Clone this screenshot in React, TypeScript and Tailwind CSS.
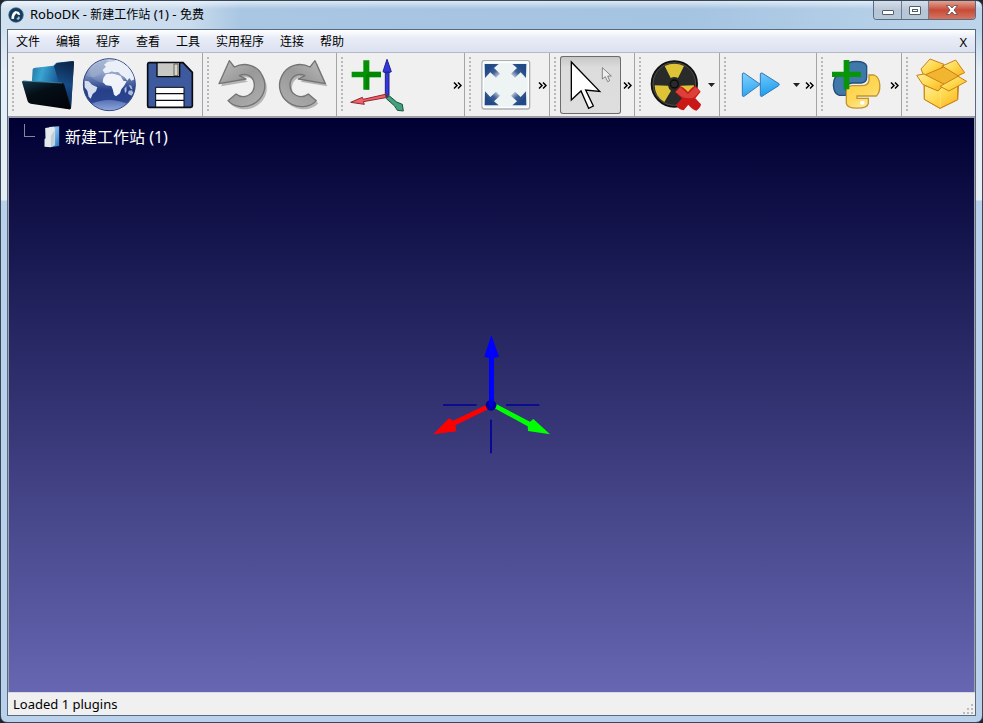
import type { ReactNode } from "react";

const menus = ["文件", "编辑", "程序", "查看", "工具", "实用程序", "连接", "帮助"];

type ToolProps = {
  label: string;
  viewBox: string;
  active?: boolean;
  children: ReactNode;
};

const Tool = ({ label, viewBox, active = false, children }: ToolProps) => (
  <button
    type="button"
    aria-label={label}
    aria-pressed={active}
    className={
      active
        ? "h-[58px] w-[61px] shrink-0 rounded-[3px] bg-linear-to-b from-[#c6c6c6] via-[#dcdcdc] via-20% to-[#dedede] ring-1 ring-inset ring-[#6c6c68]"
        : "h-[58px] w-[60px] shrink-0 rounded-[3px]"
    }
  >
    <svg viewBox={viewBox} className="h-[58px] w-[60px]" aria-hidden="true">
      {children}
    </svg>
  </button>
);

const More = () => (
  <button type="button" aria-label="更多" className="ml-auto mr-px flex h-[58px] w-[11px] items-center justify-center">
    <svg viewBox="0 0 9 7" className="h-[7px] w-[9px]" aria-hidden="true">
      <path d="M1 .5l3 3-3 3M5 .5l3 3-3 3" fill="none" stroke="#000" strokeWidth="1.5" />
    </svg>
  </button>
);

const Drop = ({ label }: { label: string }) => (
  <button type="button" aria-label={label} className="flex h-[58px] w-[11px] items-center justify-center">
    <svg viewBox="0 0 7 4" className="h-[4px] w-[7px]" aria-hidden="true">
      <path d="M0 0h7L3.500 4z" fill="#222" />
    </svg>
  </button>
);

const Group = ({ width, children }: { width: string; children: ReactNode }) => (
  <div className={`flex shrink-0 border-r border-[#a5a5a8] pt-[3px] pb-[2px] pl-1 ${width}`}>
    <div className="mt-px mr-1 h-[55px] w-[2px] shrink-0 bg-[repeating-linear-gradient(to_bottom,#b9b9b9_0px,#b9b9b9_2px,transparent_2px,transparent_4px)]" />
    <div className="flex flex-1 gap-px">{children}</div>
  </div>
);

const FolderIcon = () => (
  <>
    <defs>
      <linearGradient id="folderBack" x1="0" y1="0" x2="1" y2="0.3">
        <stop offset="0" stopColor="#1d6c96" />
        <stop offset="0.3" stopColor="#39a5d2" />
        <stop offset="0.65" stopColor="#1a5f9b" />
        <stop offset="1" stopColor="#0b2550" />
      </linearGradient>
      <linearGradient id="folderFront" x1="0" y1="0" x2="0.6" y2="1">
        <stop offset="0" stopColor="#12394c" />
        <stop offset="0.45" stopColor="#050e16" />
        <stop offset="1" stopColor="#02060b" />
      </linearGradient>
      <linearGradient id="folderSide" x1="0" y1="0" x2="0" y2="1">
        <stop offset="0" stopColor="#0a1c38" />
        <stop offset="0.5" stopColor="#17518f" />
        <stop offset="1" stopColor="#0c2a55" />
      </linearGradient>
    </defs>
    <path d="M98 58Q99 53 106 53L160 47 169 38 217 33Q223 33 222 40L213 174 208 178 92 150z" fill="url(#folderBack)" />
    <path d="M162 49L171 39 222 34 213 176 204 160 190 98 176 97z" fill="url(#folderSide)" opacity=".8" />
    <path d="M66 96Q66 92 71 92L184 98Q190 98 193 104L213 174Q212 179 206 178L92 161Q85 159 83 154z" fill="url(#folderFront)" />
    <path d="M70 93L186 99" stroke="#4d9fba" strokeWidth="2" />
  </>
);

const GlobeIcon = () => (
  <>
    <defs>
      <linearGradient id="ocean" x1="0" y1="0" x2="0" y2="1">
        <stop offset="0" stopColor="#c6d1e6" />
        <stop offset="0.3" stopColor="#7b90bf" />
        <stop offset="0.6" stopColor="#263f87" />
        <stop offset="0.82" stopColor="#2b4592" />
        <stop offset="1" stopColor="#8ba3d9" />
      </linearGradient>
      <clipPath id="globeClip">
        <circle cx="328" cy="104" r="77" />
      </clipPath>
    </defs>
    <circle cx="328" cy="104" r="78" fill="url(#ocean)" stroke="#2b437f" strokeWidth="3" />
    <g clipPath="url(#globeClip)">
      <path d="M274 56Q290 34 316 30L326 34 318 50 308 58 300 72 282 82 266 80 260 74z" fill="#8c9fc4" opacity=".7" />
      <path d="M308 60L318 50 312 44 322 36 342 34 352 28 376 38 398 64 404 88 394 92 388 84 382 92 374 82 364 76 354 66 346 70 336 64 326 68 314 70z" fill="#e9eef7" />
      <path d="M318 73L334 70 352 74 362 78 370 92 380 94 372 108 364 118 360 130 348 139 342 134 338 118 334 108 318 106 308 96 310 84z" fill="#eef2fa" />
      <path d="M254 92L266 94 276 104 292 112 288 124 278 132 272 146 266 140 262 122 254 112z" fill="#d5deef" />
      <path d="M373 116l6-7 1 14-5 7zM386 104l8 3 4 12-6-3zM386 122l10-1 4 8-6 8-10-6z" fill="#a9bbdf" />
      <path d="M328 70l12-2 14 0M350 74l6-6" stroke="#8196bd" strokeWidth="3" fill="none" />
      <ellipse cx="328" cy="64" rx="60" ry="37" fill="#fff" opacity=".13" />
      <path d="M276 161Q326 139 380 161 356 182 328 182 299 181 276 161z" fill="#92a9e0" opacity=".5" />
    </g>
  </>
);

const SaveIcon = () => (
  <>
    <path d="M447 38H549L577 67V168Q577 172 572 172H447Q443 172 443 167V43Q443 38 447 38z" fill="#3e5a9e" stroke="#080b12" strokeWidth="5" />
    <path d="M471 38H539V80H471z" fill="#c8c8c5" stroke="#080b12" strokeWidth="4" />
    <path d="M522 42H534V77H522z" fill="#d6d3c8" stroke="#30302c" strokeWidth="2" />
    <path d="M467 112H552V171H467z" fill="#fff" stroke="#080b12" strokeWidth="3" />
    <path d="M467 131H552M467 151H552" stroke="#080b12" strokeWidth="4" />
  </>
);

const turnPath =
  "M88 32L57 101 138 87 118 77C141 67 163 81 163 105 163 136 130 149 108 132L84 152C101 171 132 175 156 164 191 148 204 110 187 77 171 44 133 36 103 51z";

const TurnArrow = ({ id, flip }: { id: string; flip?: boolean }) => (
  <>
    <defs>
      <linearGradient id={id} x1="0" y1="0" x2="0.7" y2="1">
        <stop offset="0" stopColor="#bcbcbc" />
        <stop offset="0.5" stopColor="#999" />
        <stop offset="1" stopColor="#aaa" />
      </linearGradient>
    </defs>
    <g transform="translate(6 8)">
      <path d={turnPath} transform={flip ? "translate(433 0) scale(-1 1)" : undefined} fill="#b5b5b5" />
    </g>
    <path
      d={turnPath}
      transform={flip ? "translate(433 0) scale(-1 1)" : undefined}
      fill={`url(#${id})`}
      stroke="#747474"
      strokeWidth="4"
      strokeLinejoin="round"
    />
  </>
);

const FrameIcon = () => (
  <>
    <path d="M490 31h18v34h35v17h-35v37h-18V82h-35V65h35z" fill="#059105" />
    <path d="M508 65h35v17h-35v37h-10V75z" fill="#007300" opacity=".4" />
    <g strokeLinejoin="round" strokeWidth="3">
      <path d="M556 66h11v69h-11zM561 28l13 37q-13 9-25 0z" fill="#3438dc" stroke="#1f2189" />
      <path d="M560 132l3 10-73 13 3 8-41-6 35-15 3 6z" fill="#f4606a" stroke="#8b2932" />
      <path d="M566 136l24 20 17 7 3 20-18-2-8-13-25-22z" fill="#41a27b" stroke="#1c5140" />
    </g>
    <circle cx="561" cy="137" r="6" fill="#403d65" />
  </>
);

const cornerPath = "M254 42h42l-14 12 18 17-12 12-17-16-16 17z";

const FitIcon = () => (
  <>
    <defs>
      <linearGradient id="corner" x1="0" y1="0" x2="1" y2="1">
        <stop offset="0.3" stopColor="#204985" />
        <stop offset="0.6" stopColor="#3e5f97" />
        <stop offset="1" stopColor="#f1f5f8" />
      </linearGradient>
    </defs>
    <rect x="246" y="32" width="143" height="145" rx="7" fill="#eef3f4" stroke="#adb1b1" strokeWidth="4" />
    <rect x="250" y="36" width="135" height="136" rx="4" fill="none" stroke="#fff" strokeWidth="4" />
    <path d={cornerPath} fill="url(#corner)" />
    <path d={cornerPath} transform="translate(633 0) scale(-1 1)" fill="url(#corner)" />
    <path d={cornerPath} transform="translate(0 208) scale(1 -1)" fill="url(#corner)" />
    <path d={cornerPath} transform="translate(633 208) scale(-1 -1)" fill="url(#corner)" />
  </>
);

const SelectIcon = () => (
  <>
    <path d="M514 36V150L543 123 566 175 580 168 557 120 599 124z" fill="#fff" stroke="#000" strokeWidth="4" />
    <path d="M607 53V87L616 80 623 95 629 92 623 78 634 78z" fill="#eee" stroke="#555" strokeWidth="2" />
  </>
);

const CollisionIcon = () => (
  <>
    <circle cx="133" cy="102" r="68" fill="#292a2a" stroke="#111" strokeWidth="6" />
    <circle cx="133" cy="102" r="64" fill="none" stroke="#626356" strokeWidth="2" />
    <path d="M104 48Q133 34 162 48L144 84Q133 78 122 84zM74 106L114 107Q116 117 123 122L103 156Q74 139 74 106zM192 106L152 107Q151 117 143 122L163 156Q192 139 192 106z" fill="#dec337" />
    <circle cx="133" cy="102" r="12" fill="#292a29" stroke="#0b0b0b" strokeWidth="4" />
    <path d="M135 126L151 109Q160 111 174 126 188 108 197 108L212 125 196 145 213 163Q211 175 199 182 187 179 175 164L161 181Q146 180 138 165L156 145z" fill="#c91818" />
    <path d="M137 126L151 111 174 132 196 110 210 124 191 143Q166 148 153 139z" fill="#e34b42" opacity=".75" />
  </>
);

const ForwardIcon = () => (
  <>
    <defs>
      <linearGradient id="forward" x1="0" y1="0" x2="0.4" y2="1">
        <stop offset="0" stopColor="#83d2ff" />
        <stop offset="0.5" stopColor="#55baf7" />
        <stop offset="1" stopColor="#23a0ee" />
      </linearGradient>
    </defs>
    <path d="M342 69L391 103 342 139Q337 140 337 136V72Q338 68 342 69zM396 69L447 101Q449 104 446 107L396 139Q391 140 391 136V72Q392 68 396 69z" fill="url(#forward)" stroke="#3378b7" strokeWidth="3" />
  </>
);

const PythonIcon = () => (
  <>
    <defs>
      <linearGradient id="snakeYellow" x1="0" y1="0" x2="0.5" y2="1">
        <stop offset="0" stopColor="#ffcf40" />
        <stop offset="0.7" stopColor="#ffd95c" />
        <stop offset="1" stopColor="#ffeaa0" />
      </linearGradient>
    </defs>
    <path d="M139 68V48C144 29 194 31 200 48V82Q200 98 184 99H157Q139 100 138 116V136H118C100 130 98 106 102 91Q106 75 122 75H171V68z" fill="#3f78a9" stroke="#244f7c" strokeWidth="4" />
    <path d="M207 75H222C245 84 243 125 229 138H171V145H205V160C202 179 142 179 139 160V124Q140 108 158 107H186Q205 107 207 91z" fill="url(#snakeYellow)" stroke="#c0952c" strokeWidth="4" />
    <ellipse cx="187" cy="158" rx="7" ry="6" fill="#fff" />
    <path d="M131 30h17v35h35v16h-35v37h-17V81H96V65h35z" fill="#089508" />
  </>
);

const PackageIcon = () => (
  <>
    <defs>
      <linearGradient id="carton" x1="0" y1="0" x2="1" y2="1">
        <stop offset="0" stopColor="#fff0a0" />
        <stop offset="0.5" stopColor="#ffd84c" />
        <stop offset="1" stopColor="#fbb11e" />
      </linearGradient>
    </defs>
    <g stroke="#c98018" strokeWidth="3" strokeLinejoin="round">
      <path d="M372 74L431 50 477 80 473 149 420 175 373 148z" fill="#f9b82a" />
      <path d="M363 57L390 27 432 43 414 66 371 76z" fill="url(#carton)" />
      <path d="M427 48L467 30 494 68 468 80z" fill="url(#carton)" />
      <path d="M431 51L477 79 434 105 372 76z" fill="#f2b530" />
      <path d="M373 106L414 121 434 105 473 103V149L420 175 373 148z" fill="url(#carton)" />
      <path d="M350 76L372 72 433 103 414 123 368 103z" fill="url(#carton)" />
      <path d="M474 79L500 94 447 123 420 109z" fill="url(#carton)" />
    </g>
    <path d="M421 128V172" stroke="#ffe58d" strokeWidth="2" />
  </>
);

const TitleBar = () => (
  <header className="flex h-[28px] items-start justify-between pl-[1px]">
    <div className="flex h-[28px] items-center gap-[6px]">
      <svg viewBox="0 0 48 48" className="size-4" aria-hidden="true">
        <circle cx="24" cy="24" r="22" fill="#143c5c" stroke="#456984" strokeWidth="2" />
        <path d="M10 35Q11 16 23 12L33 15 37 24 30 23 25 19Q18 25 18 36z" fill="#fff" />
        <path d="M25 36L33 27 36 34 31 39z" fill="#a9c1d2" />
      </svg>
      <h1 className="text-[13px] text-black">
        RoboDK - <span className="text-xs">新建工作站</span> (1) - <span className="text-xs">免费</span>
      </h1>
    </div>
    <div className="flex h-[19px] overflow-hidden rounded-b-[4px] border border-t-0 border-[#5c6c7e]">
      <button type="button" aria-label="最小化" className="flex w-[28px] items-center justify-center border-r border-[#6c7c8e] bg-linear-to-b from-[#d5dfea] via-[#b8c6d6] to-[#b4c7da]">
        <span className="mt-1 h-[5px] w-[12px] rounded-[1px] border border-[#535c69] bg-white" />
      </button>
      <button type="button" aria-label="最大化" className="flex w-[27px] items-center justify-center border-r border-[#6c7c8e] bg-linear-to-b from-[#d5dfea] via-[#b8c6d6] to-[#b4c7da]">
        <span className="flex h-[9px] w-[12px] items-center justify-center rounded-[1px] border border-[#535c69] bg-white">
          <span className="h-[3px] w-[6px] border border-[#535c69]" />
        </span>
      </button>
      <button type="button" aria-label="关闭" className="flex w-[46px] items-center justify-center bg-linear-to-b from-[#e3a293] via-[#c64a36] via-50% to-[#d47561]">
        <svg viewBox="0 0 12 10" className="h-[10px] w-[12px]" aria-hidden="true">
          <path d="M.5.5h3.200L6 3 8.300.5h3.200L8 5l3.500 4.500H8.300L6 7 3.700 9.500H.5L4 5z" fill="#fff" stroke="#5d4850" strokeWidth=".8" />
        </svg>
      </button>
    </div>
  </header>
);

const MenuBar = () => (
  <nav className="flex h-[22px] items-end justify-between bg-linear-to-b from-white via-[#e9edf7] via-35% to-[#dce1f1] px-2 pb-[2px]">
    <div className="flex gap-4">
      {menus.map((menu) => (
        <button key={menu} type="button" className="text-xs text-black">
          {menu}
        </button>
      ))}
    </div>
    <button type="button" aria-label="关闭工作站" className="text-[13px] leading-4 text-black">
      X
    </button>
  </nav>
);

const ToolBar = () => (
  <div role="toolbar" className="flex overflow-hidden border-t border-b-2 border-t-[#b4b8c4] border-b-[#9c9ca4] bg-[#f0f0f0]">
    <Group width="w-[195px]">
      <Tool label="打开" viewBox="54 18 180 174"><FolderIcon /></Tool>
      <Tool label="在线库" viewBox="237 18 180 174"><GlobeIcon /></Tool>
      <Tool label="保存" viewBox="420 18 180 174"><SaveIcon /></Tool>
    </Group>
    <Group width="w-[134px]">
      <Tool label="撤销" viewBox="39 18 180 174"><TurnArrow id="undo" /></Tool>
      <Tool label="重做" viewBox="222 18 180 174"><TurnArrow id="redo" flip /></Tool>
    </Group>
    <Group width="w-[128px]">
      <Tool label="添加坐标系" viewBox="441 18 180 174"><FrameIcon /></Tool>
      <More />
    </Group>
    <Group width="w-[85px]">
      <Tool label="适合全部" viewBox="225 18 180 174"><FitIcon /></Tool>
      <More />
    </Group>
    <Group width="w-[85px]">
      <Tool label="选择" viewBox="480 18 180 174" active><SelectIcon /></Tool>
      <More />
    </Group>
    <Group width="w-[85px]">
      <Tool label="碰撞检测" viewBox="45 18 180 174"><CollisionIcon /></Tool>
      <Drop label="碰撞选项" />
    </Group>
    <Group width="w-[97px]">
      <Tool label="快速仿真" viewBox="300 18 180 174"><ForwardIcon /></Tool>
      <Drop label="仿真速度" />
      <More />
    </Group>
    <Group width="w-[85px]">
      <Tool label="添加 Python 程序" viewBox="81 18 180 174"><PythonIcon /></Tool>
      <More />
    </Group>
    <Group width="grow border-r-0">
      <Tool label="插件" viewBox="336 18 180 174"><PackageIcon /></Tool>
    </Group>
  </div>
);

const Station = () => (
  <main className="grid flex-1 border-x border-[#a0a0ac] bg-linear-to-b/srgb from-[#000033] to-[#6666b2]">
    <div className="col-start-1 row-start-1 flex items-start self-start pt-[6px] pl-[15px]">
      <div className="h-[13px] w-[11px] border-b border-l border-[#8585a0]" />
      <button type="button" className="mt-px ml-2 flex items-center gap-[5px] text-base text-white">
        <svg viewBox="0 0 50 66" className="h-[22px] w-[17px]" aria-hidden="true">
          <defs>
            <linearGradient id="stationBlue" x1="0" y1="0" x2="1" y2="1">
              <stop offset="0" stopColor="#d5e9f8" />
              <stop offset="0.6" stopColor="#62a7e2" />
              <stop offset="1" stopColor="#1f72c3" />
            </linearGradient>
          </defs>
          <path d="M18 3L48 1V60L25 63z" fill="url(#stationBlue)" />
          <path d="M6 6L32 2 35 10V57L23 64 4 62V40L7 37z" fill="#e3e9eb" />
          <path d="M23 30L34 12V57L23 64z" fill="#c2ced5" />
        </svg>
        <span>新建工作站 (1)</span>
      </button>
    </div>
    <svg viewBox="35 23 360 432" className="col-start-1 row-start-1 h-[144px] w-[120px] place-self-center" role="img" aria-label="坐标轴">
      <path d="M68 239H169M257 239H357M212 283V384" stroke="#00009c" strokeWidth="5" />
      <path d="M205 235L211 248 105 300 108 318 39 327 86 279 98 286z" fill="#f00" />
      <path d="M223 249L229 237 329 289 339 281 389 327 323 317 322 303z" fill="#0f0" />
      <path d="M206 239V98L192 94 213 29 236 94 221 98V239z" fill="#00f" />
      <circle cx="212" cy="240" r="16" fill="#00009c" />
      <path d="M207 222H220V240L212 248 205 240z" fill="#0000d8" />
    </svg>
  </main>
);

const StatusBar = () => (
  <footer className="flex h-[23px] items-center justify-between border-t border-[#d8d8e4] bg-[#f0f0f0] pl-[5px]">
    <p className="text-[13px] leading-4 text-black">Loaded 1 plugins</p>
    <svg viewBox="0 0 12 12" className="size-3 self-end" aria-hidden="true">
      <path d="M8 1h2v2H8zM4 5h2v2H4zM8 5h2v2H8zM0 9h2v2H0zM4 9h2v2H4zM8 9h2v2H8z" fill="#bcbcbc" />
    </svg>
  </footer>
);

const App = () => {
  return (
    <div className="flex min-h-screen flex-col bg-[#20242c] font-['Noto_Sans','Noto_Sans_CJK_SC',sans-serif]">
      <div className="flex flex-1 flex-col rounded-[7px] border border-[#36475a] bg-[linear-gradient(to_bottom,#ffffffa0_0px,transparent_8px),linear-gradient(to_bottom,transparent_30px,#e6eef5_70px,#e6eef5_199px,#b9d1ea_200px),linear-gradient(to_right,#d2e1f0,#c9dbed_190px,#a9c6e3_240px,#a5c4e2_70%,#bdd5ea)] px-[6px] pb-[6px]">
        <TitleBar />
        <div className="flex flex-1 flex-col border border-[#586a80]">
          <MenuBar />
          <ToolBar />
          <Station />
          <StatusBar />
        </div>
      </div>
    </div>
  );
};

export default App;
